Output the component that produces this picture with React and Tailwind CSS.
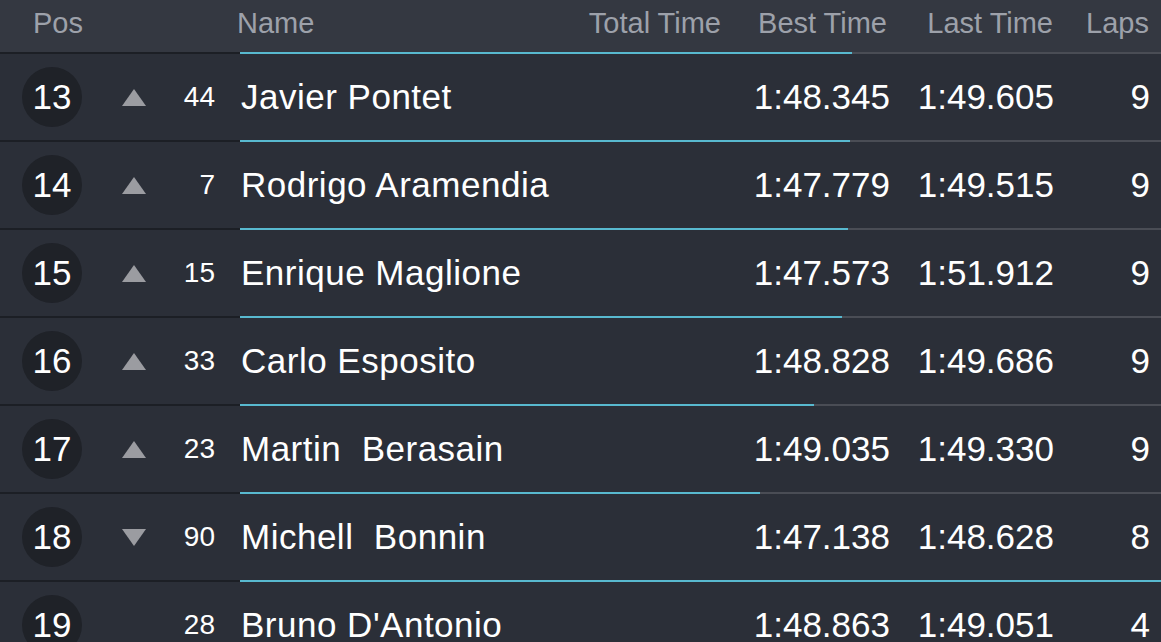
const rows = [
  { pos: 13, dir: 'up', no: 44, name: 'Javier Pontet', best: '1:48.345', last: '1:49.605', laps: 9, bar: 612 },
  { pos: 14, dir: 'up', no: 7, name: 'Rodrigo Aramendia', best: '1:47.779', last: '1:49.515', laps: 9, bar: 610 },
  { pos: 15, dir: 'up', no: 15, name: 'Enrique Maglione', best: '1:47.573', last: '1:51.912', laps: 9, bar: 608 },
  { pos: 16, dir: 'up', no: 33, name: 'Carlo Esposito', best: '1:48.828', last: '1:49.686', laps: 9, bar: 602 },
  { pos: 17, dir: 'up', no: 23, name: 'Martin  Berasain', best: '1:49.035', last: '1:49.330', laps: 9, bar: 574 },
  { pos: 18, dir: 'down', no: 90, name: 'Michell  Bonnin', best: '1:47.138', last: '1:48.628', laps: 8, bar: 520 },
  { pos: 19, dir: null, no: 28, name: "Bruno D'Antonio", best: '1:48.863', last: '1:49.051', laps: 4, bar: 921 },
]

function Arrow({ dir }) {
  if (!dir) return null
  return (
    <svg width="24" height="17" viewBox="0 0 24 17">
      {dir === 'up'
        ? <polygon points="12,0 24,17 0,17" fill="#9b9ca1" />
        : <polygon points="0,0 24,0 12,17" fill="#9b9ca1" />}
    </svg>
  )
}

function Divider({ bar }) {
  return (
    <div className="flex h-[2px]">
      <div className="w-[240px] bg-[#1c1f25]" />
      <div className="flex-1 bg-[#4a4d55]">
        <div className="h-full bg-[#58b9cf]" style={{ width: bar + 'px' }} />
      </div>
    </div>
  )
}

export default function App() {
  return (
    <div className="h-[642px] w-[1161px] overflow-hidden bg-[#2b2f38] text-white" style={{ fontFamily: "'Liberation Sans', Arial, sans-serif" }}>
      {/* header */}
      <div className="flex h-[52px] items-center pb-1 bg-[#343841] text-[29px] text-[#9da1aa]">
        <div className="w-[237px] pl-[33px]">Pos</div>
        <div className="w-[348px]">Name</div>
        <div className="w-[136px] text-right">Total Time</div>
        <div className="w-[166px] text-right">Best Time</div>
        <div className="w-[166px] text-right">Last Time</div>
        <div className="w-[96px] text-right">Laps</div>
      </div>

      {rows.map(r => (
        <div key={r.pos}>
          <Divider bar={r.bar} />
          <div className="flex h-[86px] items-center">
            <div className="w-[104px] pl-[22px]">
              <div className="flex h-[60px] w-[60px] items-center justify-center rounded-full bg-[#1f2228] text-[35px]">{r.pos}</div>
            </div>
            <div className="flex w-[60px] justify-center"><Arrow dir={r.dir} /></div>
            <div className="w-[51px] text-right text-[28px]">{r.no}</div>
            <div className="w-[370px] pl-[26px] whitespace-pre text-[35px] tracking-[0.5px]">{r.name}</div>
            <div className="w-[136px]" />
            <div className="w-[169px] text-right text-[35px]">{r.best}</div>
            <div className="w-[164px] text-right text-[35px]">{r.last}</div>
            <div className="w-[96px] text-right text-[35px]">{r.laps}</div>
          </div>
        </div>
      ))}
    </div>
  )
}
